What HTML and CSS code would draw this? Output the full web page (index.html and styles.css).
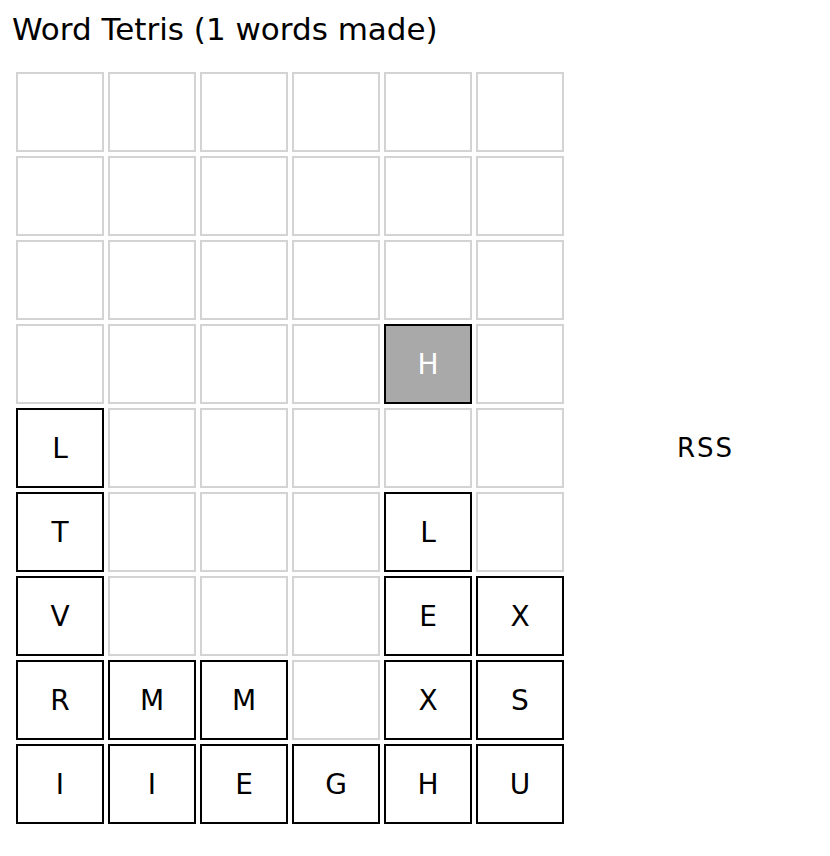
FILE: index.html
```html
<!DOCTYPE html>
<html>
<head>
<meta charset="utf-8">
<link rel="stylesheet" href="styles.css">
</head>
<body>
<h1 class="title">Word Tetris (1 words made)</h1>
<div class="layout">
  <div class="board">
    <div class="cell"></div><div class="cell"></div><div class="cell"></div><div class="cell"></div><div class="cell"></div><div class="cell"></div>
    <div class="cell"></div><div class="cell"></div><div class="cell"></div><div class="cell"></div><div class="cell"></div><div class="cell"></div>
    <div class="cell"></div><div class="cell"></div><div class="cell"></div><div class="cell"></div><div class="cell"></div><div class="cell"></div>
    <div class="cell"></div><div class="cell"></div><div class="cell"></div><div class="cell"></div><div class="cell active">H</div><div class="cell"></div>
    <div class="cell filled">L</div><div class="cell"></div><div class="cell"></div><div class="cell"></div><div class="cell"></div><div class="cell"></div>
    <div class="cell filled">T</div><div class="cell"></div><div class="cell"></div><div class="cell"></div><div class="cell filled">L</div><div class="cell"></div>
    <div class="cell filled">V</div><div class="cell"></div><div class="cell"></div><div class="cell"></div><div class="cell filled">E</div><div class="cell filled">X</div>
    <div class="cell filled">R</div><div class="cell filled">M</div><div class="cell filled">M</div><div class="cell"></div><div class="cell filled">X</div><div class="cell filled">S</div>
    <div class="cell filled">I</div><div class="cell filled">I</div><div class="cell filled">E</div><div class="cell filled">G</div><div class="cell filled">H</div><div class="cell filled">U</div>
  </div>
  <div class="side">RSS</div>
</div>
</body>
</html>
```
FILE: styles.css
```css
html, body {
  margin: 0;
  padding: 0;
  background: #fff;
}
body {
  font-family: "DejaVu Sans", "Noto Sans", sans-serif;
  color: #000;
}
.title {
  margin: 0;
  padding: 10px 0 0 12px;
  height: 72px;
  box-sizing: border-box;
  font-size: 31px;
  font-weight: normal;
  line-height: 38px;
}
.layout {
  display: flex;
  align-items: center;
  padding-left: 16px;
}
.board {
  display: grid;
  grid-template-columns: repeat(6, 88px);
  grid-auto-rows: 80px;
  gap: 4px;
}
.cell {
  box-sizing: border-box;
  border: 2px solid #d3d3d3;
  display: flex;
  align-items: center;
  justify-content: center;
  font-size: 28px;
}
.cell.filled {
  border-color: #000;
}
.cell.active {
  border-color: #000;
  background: #a9a9a9;
  color: #fff;
}
.side {
  margin-left: 113px;
  font-size: 26px;
  letter-spacing: 2px;
}
```
